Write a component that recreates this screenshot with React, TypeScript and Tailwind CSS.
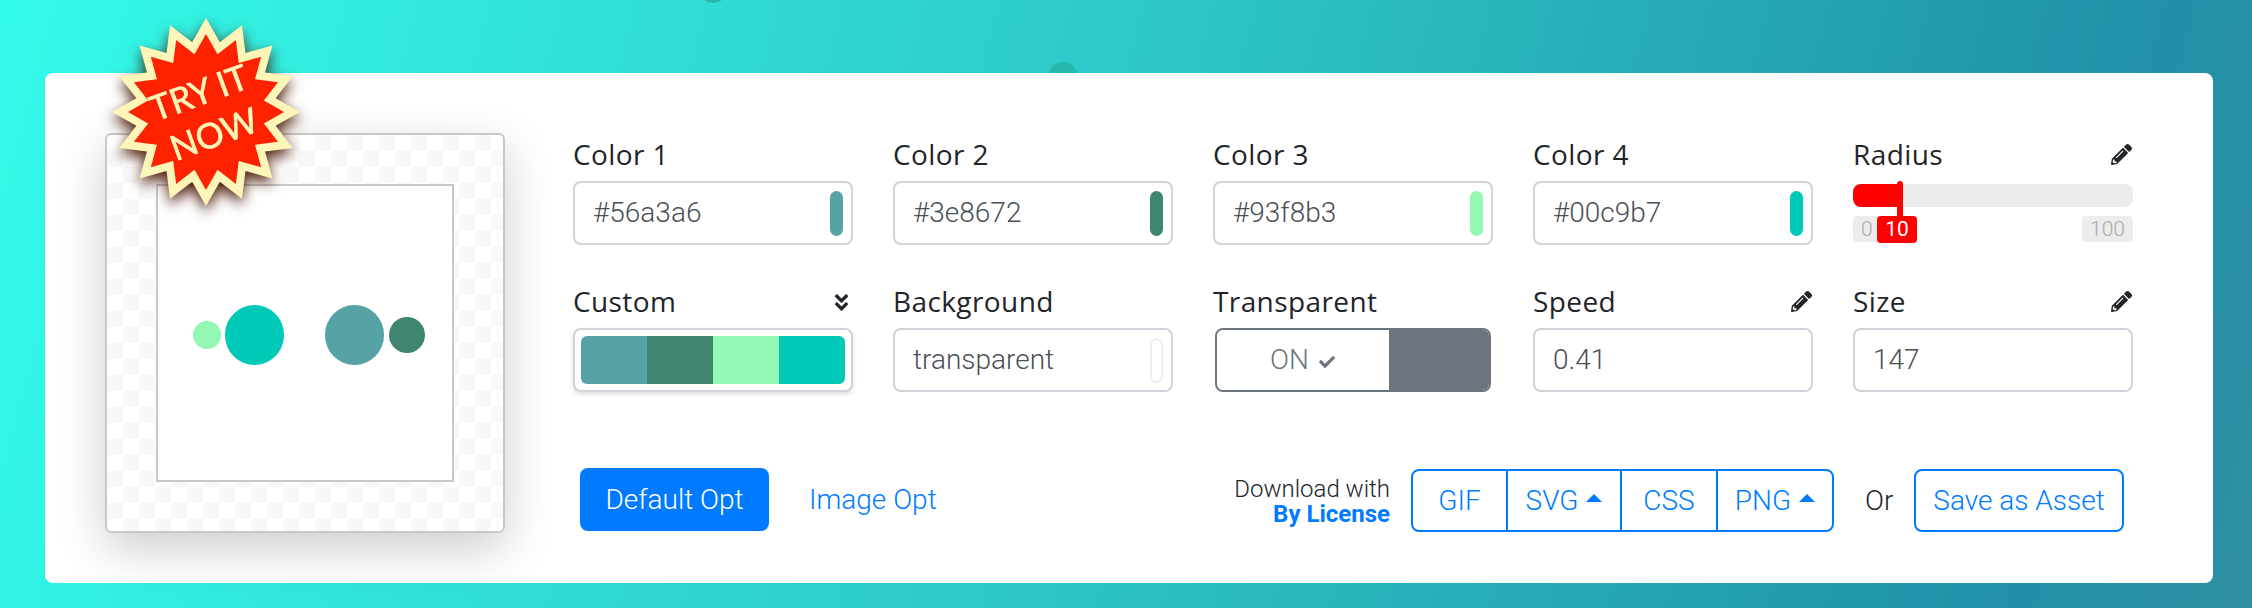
import React from 'react';
import { FaAngleDoubleDown, FaCheck, FaPencilAlt } from 'react-icons/fa';

const starPoints = (outer: number, inner: number) => {
  const pts: string[] = [];
  for (let i = 0; i < 32; i++) {
    const r = i % 2 === 0 ? outer : inner;
    const a = (i * Math.PI) / 16;
    pts.push(`${(100 + r * Math.sin(a)).toFixed(2)},${(100 - r * Math.cos(a)).toFixed(2)}`);
  }
  return pts.join(' ');
};

const FieldLabel = ({ text, icon }: { text: string; icon?: React.ReactNode }) => (
  <div className="flex h-[44px] items-start justify-between font-['Open_Sans',sans-serif] text-[28px] font-medium leading-[34px] tracking-[0.4px] text-[#212529]">
    <span>{text}</span>
    {icon}
  </div>
);

const Pencil = () => <FaPencilAlt className="mr-[1px] mt-[7px] h-[21px] w-[21px] text-[#212529]" />;

const ColorField = ({ label, value, swatch }: { label: string; value: string; swatch: string }) => (
  <div>
    <FieldLabel text={label} />
    <div className="flex h-[64px] items-center justify-between rounded-[8px] border-2 border-[#ced4da] bg-white pl-[18px] pr-[8px] font-['Roboto',sans-serif] text-[28px] font-light text-[#495057]">
      <span>{value}</span>
      <span className={`h-[45px] w-[13px] rounded-full ${swatch}`} />
    </div>
  </div>
);

const TextField = ({ label, value, icon }: { label: string; value: string; icon?: React.ReactNode }) => (
  <div>
    <FieldLabel text={label} icon={icon} />
    <div className="flex h-[64px] items-center rounded-[8px] border-2 border-[#ced4da] bg-white pl-[18px] font-['Roboto',sans-serif] text-[28px] font-light text-[#495057]">
      {value}
    </div>
  </div>
);

const Caret = () => (
  <svg width="16" height="8" viewBox="0 0 16 8" className="mb-[6px] ml-[8px]">
    <polygon points="8,0 16,8 0,8" fill="#007bff" />
  </svg>
);

const App = () => {
  return (
    <div className="relative h-[608px] w-[2252px] overflow-hidden bg-[linear-gradient(105deg,#33fbe9_0%,#2dc5c6_50%,#2090a6_90%,#2f8fa3_100%)] pl-[45px] pr-[39px] pt-[73px]">
      {/* background dots */}
      <div className="absolute left-[698px] top-[-27px] h-[30px] w-[30px] rounded-full bg-[#26b8ae]" />
      <div className="absolute left-[1048px] top-[62px] h-[30px] w-[30px] rounded-full bg-[#26b8ae]" />

      <div className="relative flex h-[510px] items-start rounded-[8px] bg-white pl-[60px]">
        {/* preview */}
        <div className="mt-[60px] flex h-[400px] w-[400px] items-center justify-center rounded-[6px] border-2 border-[#c8c8c8] bg-[conic-gradient(#f8f8f8_25%,#ffffff_0_50%,#f8f8f8_0_75%,#ffffff_0)] bg-[length:32px_32px] shadow-[0_16px_48px_rgba(0,0,0,0.2)]">
          <div className="flex h-[298px] w-[298px] items-center justify-center border-2 border-[#c8c8c8] bg-white pl-[8px] pt-[4px]">
            <span className="h-[28px] w-[28px] rounded-full bg-[#93f8b3]" />
            <span className="ml-[4px] h-[60px] w-[59px] rounded-full bg-[#00c9b7]" />
            <span className="ml-[41px] h-[60px] w-[59px] rounded-full bg-[#56a3a6]" />
            <span className="ml-[5px] h-[36px] w-[36px] rounded-full bg-[#3e8672]" />
          </div>
        </div>

        {/* form */}
        <div className="ml-[68px] mt-[64px] w-[1560px]">
          <div className="grid grid-cols-5 gap-x-[40px] gap-y-[39px]">
            <ColorField label="Color 1" value="#56a3a6" swatch="bg-[#56a3a6]" />
            <ColorField label="Color 2" value="#3e8672" swatch="bg-[#3e8672]" />
            <ColorField label="Color 3" value="#93f8b3" swatch="bg-[#93f8b3]" />
            <ColorField label="Color 4" value="#00c9b7" swatch="bg-[#00c9b7]" />

            <div>
              <FieldLabel text="Radius" icon={<Pencil />} />
              <div className="relative h-[64px] pt-[3px]">
                <div className="h-[23px] rounded-[8px] bg-[#ececec]" />
                <div className="absolute left-0 top-[3px] h-[23px] w-[50px] rounded-l-[8px] bg-[#ff0000]" />
                <div className="absolute left-[44px] top-0 h-[36px] w-[6px] rounded-t-[3px] bg-[#ff0000]" />
                <div className="mt-[9px] flex justify-between font-['Roboto',sans-serif] text-[21px] font-light leading-[26px] text-[#aaaaaa]">
                  <span className="rounded-[4px] bg-[#ececec] px-[8px]">0</span>
                  <span className="rounded-[4px] bg-[#ececec] px-[8px]">100</span>
                </div>
                <div className="absolute left-[24px] top-[35px] h-[27px] w-[40px] rounded-[4px] bg-[#ff0000] text-center font-['Roboto',sans-serif] text-[21px] leading-[27px] text-white">
                  10
                </div>
              </div>
            </div>

            <div>
              <FieldLabel text="Custom" icon={<FaAngleDoubleDown className="mr-[2px] mt-[8px] h-[21px] w-[19px] text-[#212529]" />} />
              <div className="flex h-[64px] items-center justify-center rounded-[8px] border-2 border-[#ced4da] bg-white shadow-[0_2px_4px_rgba(0,0,0,0.15)]">
                <div className="flex h-[48px] w-[264px] overflow-hidden rounded-[6px]">
                  <span className="flex-1 bg-[#56a3a6]" />
                  <span className="flex-1 bg-[#3e8672]" />
                  <span className="flex-1 bg-[#93f8b3]" />
                  <span className="flex-1 bg-[#00c9b7]" />
                </div>
              </div>
            </div>

            <ColorField label="Background" value="transparent" swatch="border-2 border-[#eeeeee] bg-white" />

            <div>
              <FieldLabel text="Transparent" />
              <div className="ml-[2px] flex h-[64px] w-[276px] overflow-hidden rounded-[8px] border-2 border-[#6c757d]">
                <div className="flex w-[172px] items-center justify-center bg-white font-['Roboto',sans-serif] text-[28px] font-light text-[#6c757d]">
                  ON
                  <FaCheck className="ml-[9px] mt-[3px] h-[16px] w-[18px]" />
                </div>
                <div className="flex-1 bg-[#6c757d]" />
              </div>
            </div>

            <TextField label="Speed" value="0.41" icon={<Pencil />} />
            <TextField label="Size" value="147" icon={<Pencil />} />
          </div>

          {/* bottom actions */}
          <div className="mt-[76px] flex items-start pl-[7px] pr-[9px] font-['Roboto',sans-serif] text-[28px] font-light">
            <button className="h-[63px] w-[189px] rounded-[8px] bg-[#007bff] text-white">Default Opt</button>
            <span className="ml-[40px] leading-[63px] text-[#007bff]">Image Opt</span>

            <div className="ml-auto mr-[21px] mt-[9px] text-right text-[24px] leading-[25px] text-[#212529]">
              <div>Download with</div>
              <div className="font-bold text-[#007bff]">By License</div>
            </div>
            <div className="mt-[1px] flex h-[63px] rounded-[8px] border-2 border-[#007bff] text-[#007bff]">
              <span className="flex w-[95px] items-center justify-center border-r-2 border-[#007bff]">GIF</span>
              <span className="flex w-[114px] items-center justify-center border-r-2 border-[#007bff]">
                SVG
                <Caret />
              </span>
              <span className="flex w-[96px] items-center justify-center border-r-2 border-[#007bff]">CSS</span>
              <span className="flex w-[114px] items-center justify-center">
                PNG
                <Caret />
              </span>
            </div>
            <span className="ml-[31px] mt-[1px] w-[49px] leading-[63px] text-[#212529]">Or</span>
            <span className="mt-[1px] flex h-[63px] w-[210px] items-center justify-center rounded-[8px] border-2 border-[#007bff] text-[#007bff]">
              Save as Asset
            </span>
          </div>
        </div>
      </div>

      {/* try it now badge */}
      <div className="absolute left-[106px] top-[12px] h-[200px] w-[200px] drop-shadow-[0_6px_7px_rgba(70,20,0,0.95)]">
        <svg viewBox="0 0 200 200" className="h-full w-full">
          <polygon points={starPoints(94, 71)} fill="#fdf6b8" />
          <polygon points={starPoints(78, 59)} fill="#ff2200" />
        </svg>
        <div className="absolute inset-0 flex -rotate-[20deg] flex-col items-center justify-center font-['Lato',sans-serif] text-[35px] leading-[44px] text-[#fdf6b8] [-webkit-text-stroke:0.6px_#fdf6b8]">
          <span>TRY IT</span>
          <span>NOW</span>
        </div>
      </div>
    </div>
  );
};

export default App;
